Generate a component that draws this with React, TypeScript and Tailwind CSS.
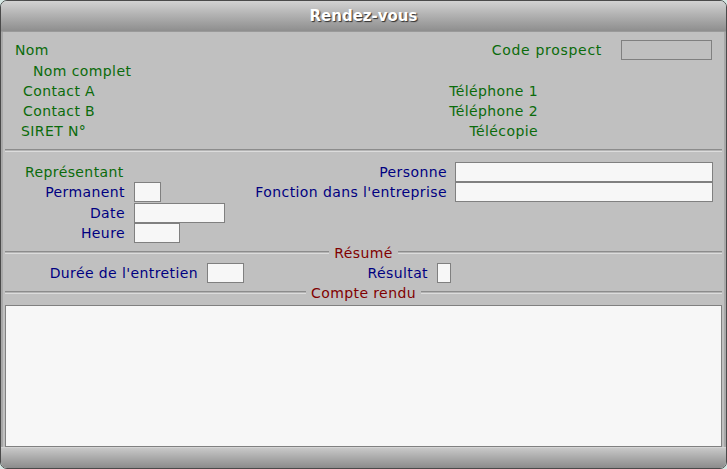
import React from 'react';

const font = { fontFamily: '"DejaVu Sans", Verdana, sans-serif' };

const Sep = ({ label }: { label?: string }) => (
  <div className="flex items-center h-[16px] mx-[2px]">
    <div className="flex-1 h-[3px] border-t border-b border-t-[#8c8c8c] border-b-[#dcdcdc] bg-[#b4b4b4]" />
    {label && <span className="px-[5px] text-[#800000] leading-none">{label}</span>}
    {label && <div className="flex-1 h-[3px] border-t border-b border-t-[#8c8c8c] border-b-[#dcdcdc] bg-[#b4b4b4]" />}
  </div>
);

const Box = ({ w, dim }: { w: string; dim?: boolean }) => (
  <div className={`${w} h-[20px] border border-[#808080] ${dim ? 'bg-transparent' : 'bg-[#f7f7f7]'}`} />
);

const App = () => {
  return (
    <div className="w-[727px] h-[469px] bg-[#d6e8e4]">
      <div
        className="w-[727px] h-[469px] rounded-[7px] border border-[#4a4a4a] overflow-hidden flex flex-col text-[14px] tracking-[0.4px]"
        style={font}
      >
        {/* Title bar */}
        <div className="h-[32px] flex items-center justify-center bg-gradient-to-b from-[#d2d2d2] to-[#8e8e8e] border-b border-[#9a9a9a]">
          <span className="text-white font-bold text-[15px] tracking-normal [text-shadow:1px_1px_1px_#303030]">
            Rendez-vous
          </span>
        </div>

        <div className="flex-1 bg-[#c0c0c0] flex flex-col border-x-2 border-[#a8a8a8]">
          {/* Prospect block */}
          <div className="pt-[8px] flex flex-col text-[#0b6b0b] leading-none">
            <div className="flex items-center h-[21px]">
              <div className="w-[599px] flex justify-between pl-[12px]">
                <span>Nom</span>
                <span className="tracking-[0.7px]">Code prospect</span>
              </div>
              <div className="ml-[19px]">
                <Box w="w-[91px]" dim />
              </div>
            </div>
            <div className="flex items-center h-[20px] pl-[30px]">Nom complet</div>
            <div className="flex items-center h-[20px] w-[535px] justify-between pl-[20px]">
              <span>Contact A</span>
              <span>Téléphone 1</span>
            </div>
            <div className="flex items-center h-[20px] w-[535px] justify-between pl-[20px]">
              <span>Contact B</span>
              <span>Téléphone 2</span>
            </div>
            <div className="flex items-center h-[20px] w-[535px] justify-between pl-[18px]">
              <span>SIRET N°</span>
              <span>Télécopie</span>
            </div>
          </div>

          <div className="mt-[2px]">
            <Sep />
          </div>

          {/* Rendez-vous block */}
          <div className="mt-[3px] flex flex-col leading-none text-[#000080]">
            <div className="flex items-center h-[20px]">
              <div className="w-[130px] pl-[22px] text-[#0b6b0b]">Représentant</div>
              <div className="w-[314px] text-right">Personne</div>
              <div className="ml-[8px]">
                <Box w="w-[258px]" />
              </div>
            </div>
            <div className="flex items-center h-[21px]">
              <div className="w-[122px] text-right">Permanent</div>
              <div className="ml-[9px]">
                <Box w="w-[27px]" />
              </div>
              <div className="w-[286px] text-right">Fonction dans l'entreprise</div>
              <div className="ml-[8px]">
                <Box w="w-[258px]" />
              </div>
            </div>
            <div className="flex items-center h-[20px]">
              <div className="w-[122px] text-right">Date</div>
              <div className="ml-[9px]">
                <Box w="w-[91px]" />
              </div>
            </div>
            <div className="flex items-center h-[20px]">
              <div className="w-[122px] text-right">Heure</div>
              <div className="ml-[9px]">
                <Box w="w-[46px]" />
              </div>
            </div>
          </div>

          <div className="mt-[2px]">
            <Sep label="Résumé" />
          </div>

          <div className="mt-[2px] flex items-center h-[21px] leading-none text-[#000080]">
            <div className="w-[195px] text-right">Durée de l'entretien</div>
            <div className="ml-[9px]">
              <Box w="w-[37px]" />
            </div>
            <div className="w-[184px] text-right">Résultat</div>
            <div className="ml-[9px]">
              <Box w="w-[14px]" />
            </div>
          </div>

          <div className="mt-[1px]">
            <Sep label="Compte rendu" />
          </div>

          <div className="mt-[4px] mx-[2px] h-[142px] border border-[#808080] bg-[#f7f7f7]" />
        </div>

        {/* Footer */}
        <div className="h-[22px] bg-gradient-to-b from-[#c8c8c8] to-[#8c8c8c] border-t border-[#d4d4d4]" />
      </div>
    </div>
  );
};

export default App;
